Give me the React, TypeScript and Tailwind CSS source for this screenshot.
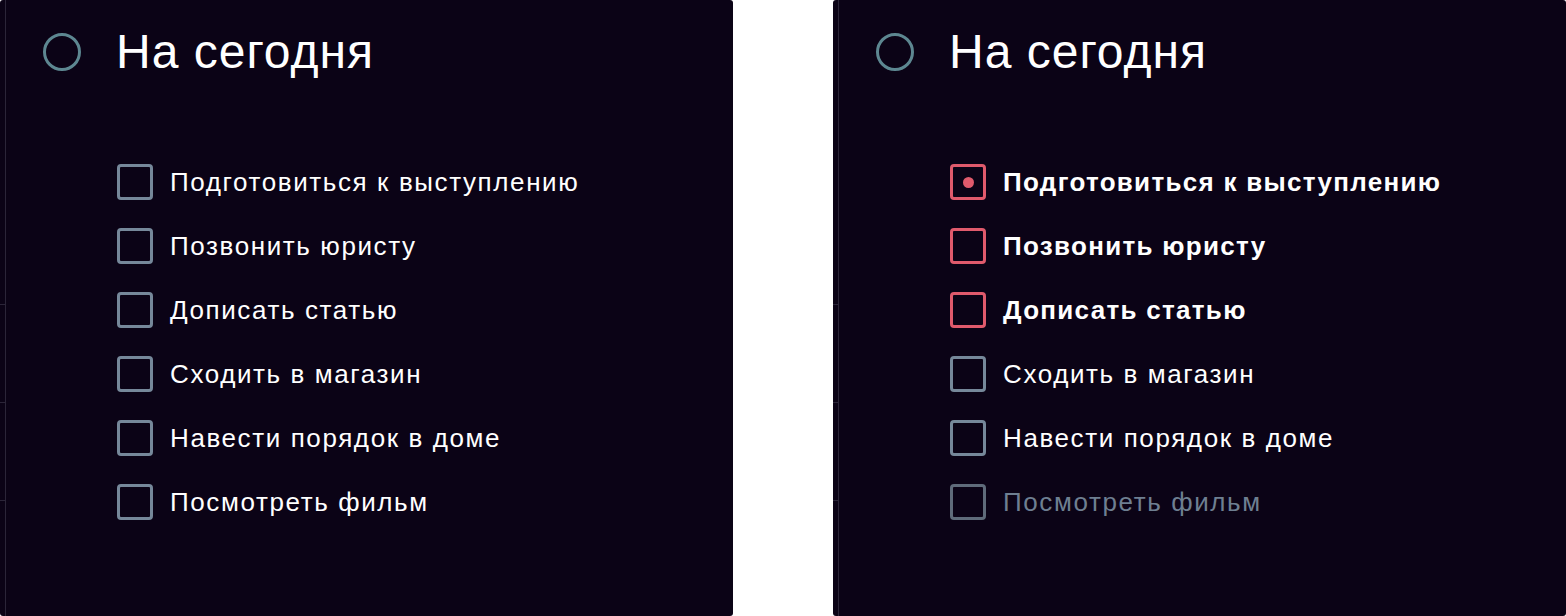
const tasks = [
  'Подготовиться к выступлению',
  'Позвонить юристу',
  'Дописать статью',
  'Сходить в магазин',
  'Навести порядок в доме',
  'Посмотреть фильм',
]

type Variant = 'plain' | 'focus'

function Checkbox({ tone, dot }: { tone: 'gray' | 'red' | 'dim'; dot?: boolean }) {
  const border =
    tone === 'red' ? 'border-[#e05a6c]' : tone === 'dim' ? 'border-[#5f6b7a]' : 'border-[#76889a]'
  return (
    <div className={`w-[36px] h-[36px] shrink-0 rounded-[4px] border-[3px] ${border} flex items-center justify-center`}>
      {dot && <div className="w-[11px] h-[11px] rounded-full bg-[#e05a6c]" />}
    </div>
  )
}

function Gutter() {
  return (
    <div className="w-[6px] shrink-0 flex">
      <div className="w-[5px] flex flex-col">
        <div className="h-[304px]" />
        <div className="h-px bg-[#2b2538]" />
        <div className="h-[97px]" />
        <div className="h-px bg-[#2b2538]" />
        <div className="h-[97px]" />
        <div className="h-px bg-[#2b2538]" />
      </div>
      <div className="w-px bg-[#2b2538]" />
    </div>
  )
}

function Panel({ variant }: { variant: Variant }) {
  return (
    <section className="w-[733px] h-[616px] bg-[#0b0316] rounded-[3px] flex">
      <Gutter />
      <div className="flex-1 pl-[37px] pt-[33px]">
        <div className="flex items-center h-[38px] gap-[35px]">
          <div className="w-[38px] h-[38px] rounded-full border-[3px] border-[#5d8791]" />
          <h2 className="text-[48px] leading-none tracking-[1px] text-white">На сегодня</h2>
        </div>

        <ul className="mt-[79px] ml-[74px]">
          {tasks.map((t, i) => {
            const hot = variant === 'focus' && i < 3
            const dim = variant === 'focus' && i === 5
            return (
              <li key={t} className="h-16 flex items-center gap-[17px]">
                <Checkbox tone={hot ? 'red' : dim ? 'dim' : 'gray'} dot={hot && i === 0} />
                <span
                  className={`text-[26px] ${hot ? 'font-bold tracking-[1.3px]' : 'tracking-[1.6px]'} ${dim ? 'text-[#6e7f91]' : 'text-white'}`}
                >
                  {t}
                </span>
              </li>
            )
          })}
        </ul>
      </div>
    </section>
  )
}

export default function App() {
  return (
    <div className="w-[1566px] h-[616px] bg-white flex gap-[100px] font-[family-name:'Liberation_Sans',Arial,sans-serif]">
      <Panel variant="plain" />
      <Panel variant="focus" />
    </div>
  )
}
